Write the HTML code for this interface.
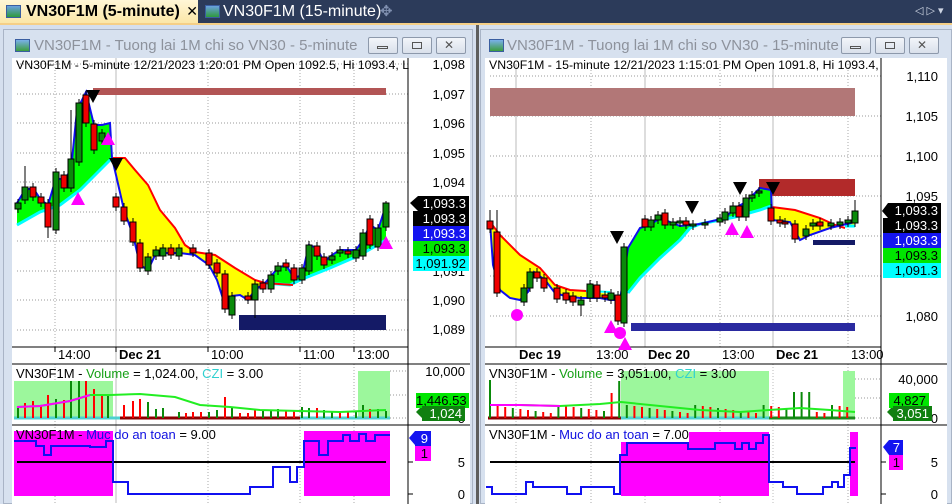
<!DOCTYPE html><html><head><meta charset="utf-8"><style>
*{margin:0;padding:0;box-sizing:border-box}
body{width:952px;height:504px;overflow:hidden;background:#d5dfee;font-family:"Liberation Sans",sans-serif;position:relative}
.a{position:absolute}
.tab{top:0;height:23px;font-size:15px;line-height:23px}
.win{background:#d7e1ef}
.tt{font-size:15px;color:#8d929c;white-space:nowrap}
.btn{width:30px;height:17px;border:1px solid #8d99ab;border-radius:2px;background:linear-gradient(#f2f5fa,#d9e0eb)}
.lbl{font-size:13px;color:#000;text-align:right;width:56px}
.box{font-size:13px;text-align:right;padding-right:3px;line-height:15px;height:15px}
.hd{font-size:13px;white-space:nowrap}
.hs{font-size:12.3px}
</style></head><body>
<div class="a" style="left:0;top:0;width:952px;height:23px;background:#2c3b5a"></div>
<div class="a" style="left:0;top:23px;width:952px;height:2px;background:#f5cf87"></div>
<div class="a tab" style="left:0;width:198px;background:linear-gradient(#fff6d6,#fbe7a8);font-weight:bold;padding-left:26px;font-size:16px">VN30F1M (5-minute) <span style="font-weight:normal;font-size:14px;margin-left:2px">✕</span></div>
<div class="a" style="left:6px;top:5px;width:15px;height:13px;background:linear-gradient(#6aa0e0,#2f9a3c);border:1px solid #3a5ea0"></div>
<div class="a" style="left:205px;top:5px;width:15px;height:13px;background:linear-gradient(#6aa0e0,#2f9a3c);border:1px solid #3a5ea0"></div>
<div class="a tab" style="left:223px;color:#fff;font-size:16px">VN30F1M (15-minute)</div>
<div class="a tab" style="left:380px;color:#8090b0">✥</div>
<div class="a tab" style="left:915px;color:#cfd6e4;font-size:11px">◁ ▷ ▾</div>

<div class="a win" style="left:3px;top:29px;width:470px;height:475px;border:1px solid #a9b4c6"></div>
<div class="a" style="left:15px;top:39px;width:15px;height:13px;background:linear-gradient(#7ab0ea,#3c9d3e);border:1px solid #3a5ea0"></div>
<div class="a tt" style="left:34px;top:37px">VN30F1M - Tuong lai 1M chi so VN30 - 5-minute</div>
<div class="a btn" style="left:368px;top:37px"></div><div class="a btn" style="left:402px;top:37px"></div><div class="a btn" style="left:436px;top:37px"></div>
<div class="a" style="left:377px;top:46px;width:11px;height:3px;border:1px solid #555"></div>
<div class="a" style="left:412px;top:42px;width:10px;height:7px;border:1px solid #555"></div>
<div class="a" style="left:444px;top:38px;font-size:12px;color:#555">✕</div>

<div class="a" style="left:476px;top:25px;width:3px;height:479px;background:#5e5e5e"></div>
<div class="a win" style="left:480px;top:29px;width:472px;height:475px;border:1px solid #a9b4c6"></div>
<div class="a" style="left:489px;top:39px;width:15px;height:13px;background:linear-gradient(#7ab0ea,#3c9d3e);border:1px solid #3a5ea0"></div>
<div class="a tt" style="left:507px;top:37px">VN30F1M - Tuong lai 1M chi so VN30 - 15-minute</div>
<div class="a btn" style="left:841px;top:37px"></div><div class="a btn" style="left:875px;top:37px"></div><div class="a btn" style="left:909px;top:37px"></div>
<div class="a" style="left:850px;top:46px;width:11px;height:3px;border:1px solid #555"></div>
<div class="a" style="left:885px;top:42px;width:10px;height:7px;border:1px solid #555"></div>
<div class="a" style="left:917px;top:38px;font-size:12px;color:#555">✕</div>

<svg class="a" style="left:0;top:0" width="952" height="504" id="s">
<rect x="12" y="58" width="458" height="446" fill="#fff"/>
<rect x="485" y="58" width="462" height="446" fill="#fff"/>
<g id="g"></g>
</svg>

<div class="a hd hs" style="left:16px;top:58px">VN30F1M - 5-minute 12/21/2023 1:20:01 PM Open 1092.5, Hi 1093.4, L</div>
<div class="a lbl" style="left:409px;top:57px">1,098</div>
<div class="a lbl" style="left:409px;top:87px">1,097</div>
<div class="a lbl" style="left:409px;top:116px">1,096</div>
<div class="a lbl" style="left:409px;top:146px">1,095</div>
<div class="a lbl" style="left:409px;top:175px">1,094</div>
<div class="a lbl" style="left:409px;top:264px">1,091</div>
<div class="a lbl" style="left:409px;top:293px">1,090</div>
<div class="a lbl" style="left:409px;top:322px">1,089</div>
<div class="a box" style="left:418px;top:196px;width:51px;background:#000;color:#fff">1,093.3</div>
<div class="a box" style="left:413px;top:211px;width:56px;background:#000;color:#fff">1,093.3</div>
<div class="a box" style="left:413px;top:226px;width:56px;background:#1414f0;color:#fff">1,093.3</div>
<div class="a box" style="left:413px;top:241px;width:56px;background:#00e600;color:#000">1,093.3</div>
<div class="a box" style="left:413px;top:256px;width:56px;background:#00ffff;color:#000">1,091.92</div>
<div class="a hd" style="left:58px;top:347px">14:00</div>
<div class="a hd" style="left:119px;top:347px;font-weight:bold">Dec 21</div>
<div class="a hd" style="left:211px;top:347px">10:00</div>
<div class="a hd" style="left:303px;top:347px">11:00</div>
<div class="a hd" style="left:357px;top:347px">13:00</div>
<div class="a hd" style="left:16px;top:366px">VN30F1M - <span style="color:#16a016">Volume</span> = 1,024.00, <span style="color:#30d0d0">CZI</span> = 3.00</div>
<div class="a lbl" style="left:409px;top:364px">10,000</div>
<div class="a lbl" style="left:409px;top:411px">0</div>
<div class="a box" style="left:416px;top:393px;width:53px;background:#00e600;color:#000">1,446.53</div>
<div class="a box" style="left:422px;top:406px;width:43px;background:#108010;color:#fff">1,024</div>
<div class="a hd" style="left:16px;top:427px">VN30F1M - <span style="color:#1010e0">Muc do an toan</span> = 9.00</div>
<div class="a lbl" style="left:409px;top:455px">5</div>
<div class="a lbl" style="left:409px;top:487px">0</div>
<div class="a box" style="left:415px;top:431px;width:16px;background:#1414f0;color:#fff">9</div>
<div class="a box" style="left:415px;top:446px;width:16px;background:#ff00ff;color:#000">1</div>

<div class="a hd hs" style="left:489px;top:58px">VN30F1M - 15-minute 12/21/2023 1:15:01 PM Open 1091.8, Hi 1093.4,</div>
<div class="a lbl" style="left:882px;top:69px">1,110</div>
<div class="a lbl" style="left:882px;top:109px">1,105</div>
<div class="a lbl" style="left:882px;top:149px">1,100</div>
<div class="a lbl" style="left:882px;top:189px">1,095</div>
<div class="a lbl" style="left:882px;top:309px">1,080</div>
<div class="a box" style="left:888px;top:203px;width:53px;background:#000;color:#fff">1,093.3</div>
<div class="a box" style="left:883px;top:218px;width:58px;background:#000;color:#fff">1,093.3</div>
<div class="a box" style="left:883px;top:233px;width:58px;background:#1414f0;color:#fff">1,093.3</div>
<div class="a box" style="left:883px;top:248px;width:58px;background:#00e600;color:#000">1,093.3</div>
<div class="a box" style="left:883px;top:263px;width:58px;background:#00ffff;color:#000">1,091.3</div>
<div class="a hd" style="left:519px;top:347px;font-weight:bold">Dec 19</div>
<div class="a hd" style="left:596px;top:347px">13:00</div>
<div class="a hd" style="left:648px;top:347px;font-weight:bold">Dec 20</div>
<div class="a hd" style="left:722px;top:347px">13:00</div>
<div class="a hd" style="left:776px;top:347px;font-weight:bold">Dec 21</div>
<div class="a hd" style="left:851px;top:347px">13:00</div>
<div class="a hd" style="left:489px;top:366px">VN30F1M - <span style="color:#16a016">Volume</span> = 3,051.00, <span style="color:#30d0d0">CZI</span> = 3.00</div>
<div class="a lbl" style="left:882px;top:372px">40,000</div>
<div class="a lbl" style="left:882px;top:411px">0</div>
<div class="a box" style="left:889px;top:393px;width:40px;background:#00e600;color:#000">4,827</div>
<div class="a box" style="left:893px;top:406px;width:39px;background:#108010;color:#fff">3,051</div>
<div class="a hd" style="left:489px;top:427px;background:#fff">VN30F1M - <span style="color:#1010e0">Muc do an toan</span> = 7.00</div>
<div class="a lbl" style="left:882px;top:455px">5</div>
<div class="a lbl" style="left:882px;top:487px">0</div>
<div class="a box" style="left:889px;top:440px;width:14px;background:#1414f0;color:#fff">7</div>
<div class="a box" style="left:889px;top:455px;width:14px;background:#ff00ff;color:#000">1</div>

<script>
var h='';
function L(x1,y1,x2,y2,c,w,d){h+='<line x1="'+x1+'" y1="'+y1+'" x2="'+x2+'" y2="'+y2+'" stroke="'+c+'" stroke-width="'+(w||1)+'"'+(d?' stroke-dasharray="1,2"':'')+'/>';}
function R(x,y,w,hh,c){h+='<rect x="'+x+'" y="'+y+'" width="'+w+'" height="'+hh+'" fill="'+c+'"/>';}
function P(pts,c,s,w){h+='<polyline points="'+pts+'" fill="'+(c||'none')+'" stroke="'+(s||'none')+'" stroke-width="'+(w||2)+'"/>';}
function T(x,y,dn,c){h+= dn?'<polygon points="'+(x-7)+','+y+' '+(x+7)+','+y+' '+x+','+(y+13)+'" fill="'+c+'"/>':'<polygon points="'+(x-7)+','+(y+13)+' '+(x+7)+','+(y+13)+' '+x+','+y+'" fill="'+c+'"/>';}
function C(a,w){a.forEach(function(c){var x=c[0],t=c[1],b=c[2],g=c[3];L(x,c[4]||t-4,x,c[5]||b+4,'#000',1);h+='<rect x="'+(x-w/2)+'" y="'+t+'" width="'+w+'" height="'+Math.max(b-t,2)+'" fill="'+(g?'#0a8a0a':'#f00000')+'" stroke="#000" stroke-width="1"/>';});}
[64,94,123,153,182,212,241,271,300,330].forEach(function(y){L(17,y,408,y,'#999',1,1)});
[55,208,300,354].forEach(function(x){L(x,64,x,347,'#aaa',1,1);L(x,364,x,503,'#aaa',1,1)});
L(116,58,116,503,'#bbb',1);
L(408,58,408,504,'#000',1);L(12,347,408,347,'#000',1);L(12,364,470,364,'#000',1);L(12,425,470,425,'#000',1);
[55,116,208,300,354].forEach(function(x){L(x,347,x,352,'#000',1)});
R(93,88,293,7,'#b25555');R(239,315,147,15,'#141a66');
P('17,203 25,190 33,188 41,200 48,205 56,178 64,180 71,170 77,110 86,92 94,125 102,125 110,123 112,158 100,170 80,190 60,205 40,212 17,225','#00ff00');
P('112,158 125,158 135,170 148,185 160,210 175,228 185,245 195,252 215,255 235,268 255,280 265,283 255,290 248,300 240,295 232,296 225,305 217,280 209,265 195,255 180,253 156,253 148,270 140,265 133,235 124,210 116,175','#ffff00');
P('265,283 271,276 278,268 286,265 294,278 302,275 309,245 317,248 324,262 332,255 340,250 356,250 363,240 370,225 378,230 386,205 386,240 360,255 330,268 300,280 290,285','#00ff00');
P('17,225 40,212 60,205 80,190 100,170 112,158','none','#00ffff',3);
P('265,283 290,285 300,280 330,268 360,255 386,240','none','#00ffff',3);
P('112,158 125,158 135,170 148,185 160,210 175,228 185,245 195,252 215,255 235,268 255,280 265,283 293,285','none','#f00',2);
P('17,203 25,190 33,188 41,200 48,205 56,178 64,180 71,170 77,110 86,92 94,125 102,125 110,123 112,158 116,175 124,210 133,235 140,265 148,270 156,253 180,253 195,255 209,265 217,280 225,305 232,296 240,295 248,300 255,290 265,283 271,276 278,268 286,265 294,278 302,275 309,245 317,248 324,262 332,255 340,250 356,250 363,240 370,225 378,230 386,205','none','#1010f0',2);
C([[18,203,209,1],[25,187,200,1,166],[33,187,197,0],[41,197,203,0],[48,203,227,0,0,238],[56,172,230,1],[64,175,188,0],[71,159,188,1,110],[79,103,162,1],[86,95,123,0],[94,124,150,0],[102,133,141,1],[116,197,207,0],[124,207,221,0],[133,222,242,0],[140,243,268,0],[148,257,271,1],[156,250,256,1],[163,248,256,1],[171,248,255,0],[179,248,256,1],[193,248,253,0],[209,253,265,0],[217,263,273,0],[225,274,309,0],[232,296,315,1],[248,296,300,0],[255,284,300,1,0,318],[263,283,289,0],[271,275,289,1],[278,266,271,1],[286,263,267,0],[294,268,280,0],[302,268,280,1],[309,245,271,1],[317,246,256,0],[324,257,265,0],[332,256,260,1],[340,250,253,1],[348,251,254,0],[356,250,258,1],[363,233,256,1],[370,219,245,0],[378,228,247,1],[386,203,227,1,201]],6);
T(93,90,1,'#000');T(116,158,1,'#000');T(78,192,0,'#ff00ff');T(108,132,0,'#ff00ff');T(386,236,0,'#ff00ff');
R(14,381,99,38,'#9cf79c');R(358,371,32,48,'#9cf79c');
L(14,418,390,418,'#4dd0d0',3);L(120,418,300,418,'#8b0000',3);
var vb=[[18,408,1],[25,403,0],[33,401,0],[41,405,0],[48,395,0],[56,399,1],[64,400,0],[71,381,1],[79,381,1],[86,381,0],[94,389,0],[102,394,0],[108,395,1],[124,405,0],[133,401,0],[140,399,0],[148,402,1],[156,409,1],[163,408,1],[179,412,1],[186,413,0],[193,412,0],[201,412,0],[209,412,1],[217,410,1],[225,397,0],[232,407,1],[240,413,0],[248,413,0],[255,410,0],[263,410,1],[271,411,1],[278,409,1],[286,410,0],[294,410,0],[302,407,1],[309,408,1],[317,408,0],[324,410,1],[332,411,1],[340,412,0],[348,412,0],[356,412,1],[363,405,1],[370,409,0],[378,409,1],[386,411,1]];
vb.forEach(function(b){L(b[0],b[1],b[0],418,b[2]?'#0a8a0a':'#f00',2)});
P('17,407 40,406 70,401 90,395 110,395 140,394 175,397 200,405 230,407 260,410 300,411 340,412 386,410','none','#22ee22',2);
P('17,407 40,406 70,401 90,395','none','#ff00ff',2);
L(390,371,408,371,'#999',1,1);L(390,395,408,395,'#999',1,1);L(390,418,408,418,'#999',1,1);
R(14,431,99,65,'#ff00ff');R(304,431,86,65,'#ff00ff');
L(17,462,386,462,'#000',2);
P('14,441 36,441 36,446 44,446 44,455 51,455 51,446 90,446 90,447 106,447 106,441 113,441 113,482 128,482 128,494 250,494 250,487 273,487 273,467 290,467 290,482 297,482 297,467 304,467 304,441 319,441 319,455 328,455 328,441 343,441 343,435 350,435 350,441 359,441 359,434 366,434 366,441 375,441 375,435 390,435','none','#1010f0',2);
L(408,462,413,462,'#000');L(408,494,413,494,'#000');
[76,116,156,196,236,276,316].forEach(function(y){L(490,y,881,y,'#999',1,1)});
[591,720,848].forEach(function(x){L(x,64,x,347,'#aaa',1,1);L(x,364,x,503,'#aaa',1,1)});
[516,645,773].forEach(function(x){L(x,64,x,347,'#bbb',1);L(x,364,x,503,'#bbb',1,1)});
L(881,58,881,504,'#000');L(485,347,881,347,'#000');L(485,364,947,364,'#000');L(485,425,947,425,'#000');
R(490,88,365,28,'#b27777');R(759,179,96,17,'#b22a2a');R(631,323,224,8,'#2a2aa0');R(813,240,42,5,'#141a66');
P('490,222 500,235 520,255 540,268 555,285 570,290 586,291 610,294 610,297 586,298 565,296 555,293 545,280 534,272 528,292 520,300 510,298 500,290 493,265','#ffff00');
P('620,300 628,248 640,228 650,225 660,218 680,226 700,224 690,228 680,240 660,258 640,278 628,293','#00ff00');
P('705,224 725,218 735,208 746,202 760,188 771,190 771,206 760,210 735,217','#00ff00');
P('772,207 795,210 820,218 835,225 855,225 855,222 830,228 810,235 800,240 790,222 772,220','#ffff00');
P('490,222 500,235 520,255 540,268 555,285 570,290 586,291','none','#f00',2);
P('772,207 795,210 820,218 835,225 845,228','none','#f00',2);
P('586,291 610,292','none','#00ffff',2);P('628,293 640,278 660,258 680,240 690,228 700,224 735,217 760,210 771,206','none','#00ffff',3);
P('845,226 855,226','none','#00ffff',3);
P('490,222 493,265 500,290 510,298 520,300 528,292 534,272 545,280 555,293 565,296 580,298 600,298 610,300 620,300 628,248 640,228 650,225 660,218 680,226 700,224 725,218 735,208 746,202 760,188 771,190 772,220 790,222 800,240 810,235 830,228 855,222','none','#1010f0',2);
C([[490,221,229,0,210],[497,232,293,0,210],[524,288,302,1],[530,272,288,1],[537,272,278,0],[544,278,288,0],[557,288,299,0],[566,293,300,0],[573,296,302,0],[581,300,305,1,0,316],[590,284,298,1],[597,285,298,0],[605,295,298,0],[611,293,300,1],[618,295,321,0],[624,247,323,1],[645,219,227,0],[651,220,227,1],[658,215,220,1],[665,213,225,0],[673,222,225,1],[680,221,223,1],[686,221,225,0],[693,224,226,1],[705,223,225,1],[720,218,222,1],[725,212,220,1],[733,206,213,1],[739,206,217,0],[746,198,217,1],[752,195,198,1],[759,191,193,1],[771,208,221,0],[780,220,223,0],[785,222,224,0],[795,224,239,0],[806,229,236,1],[813,223,226,1],[820,222,226,0],[831,223,226,1],[840,222,225,1],[848,220,223,1],[855,211,223,1,200]],6);
T(617,231,1,'#000');T(692,201,1,'#000');T(740,182,1,'#000');T(773,182,1,'#000');
T(611,320,0,'#ff00ff');T(625,337,0,'#ff00ff');T(732,222,0,'#ff00ff');T(747,225,0,'#ff00ff');
h+='<circle cx="517" cy="315" r="6" fill="#ff00ff"/><circle cx="620" cy="333" r="6" fill="#ff00ff"/>';
R(621,371,148,48,'#9cf79c');R(843,371,12,48,'#9cf79c');
L(488,418,621,418,'#8b0000',3);L(621,418,855,418,'#4dd0d0',3);L(769,418,855,418,'#1a8a1a',3);
for(var i=0;i<48;i++){var x=490+i*7.6,y=405+((i*37)%9),c=i%3?'#f00':'#0a8a0a';if(i==0)y=380;if(i==16)y=393;if(i==17){y=381;c='#0a8a0a'}if(i>=40&&i<43){y=392;c='#0a8a0a'}L(x,y,x,418,c,2);}
P('490,405 520,405 560,406 600,404 621,402 650,405 700,410 740,412 769,410 800,408 830,410 855,412','none','#22ee22',2);
P('490,405 520,405 560,406','none','#ff00ff',2);
L(855,379,881,379,'#999',1,1);L(855,398,881,398,'#999',1,1);L(855,418,881,418,'#999',1,1);
R(621,432,148,64,'#ff00ff');R(850,432,8,64,'#ff00ff');
L(490,462,855,462,'#000',2);
P('486,487 492,487 492,494 526,494 526,482 533,482 533,487 567,487 567,494 581,494 581,487 614,487 614,494 620,494 620,455 627,455 627,443 688,443 688,449 715,449 715,443 735,443 735,449 742,449 742,443 749,443 749,449 756,449 756,443 763,443 763,435 769,435 769,482 783,482 783,487 797,487 797,494 823,494 823,487 832,487 832,482 838,482 838,487 844,487 844,475 850,475 850,448 856,448','none','#1010f0',2);
L(881,462,886,462,'#000');L(881,494,886,494,'#000');
h+='<polygon points="410,203 418,196 418,211" fill="#000"/><polygon points="416,412 422,406 422,418" fill="#108010"/><polygon points="409,438 415,431 415,445" fill="#1414f0"/>';
h+='<polygon points="882,211 888,203 888,218" fill="#000"/><polygon points="887,412 893,406 893,418" fill="#108010"/><polygon points="883,447 889,440 889,455" fill="#1414f0"/>';
document.getElementById('g').innerHTML=h;
</script>
</body></html>
